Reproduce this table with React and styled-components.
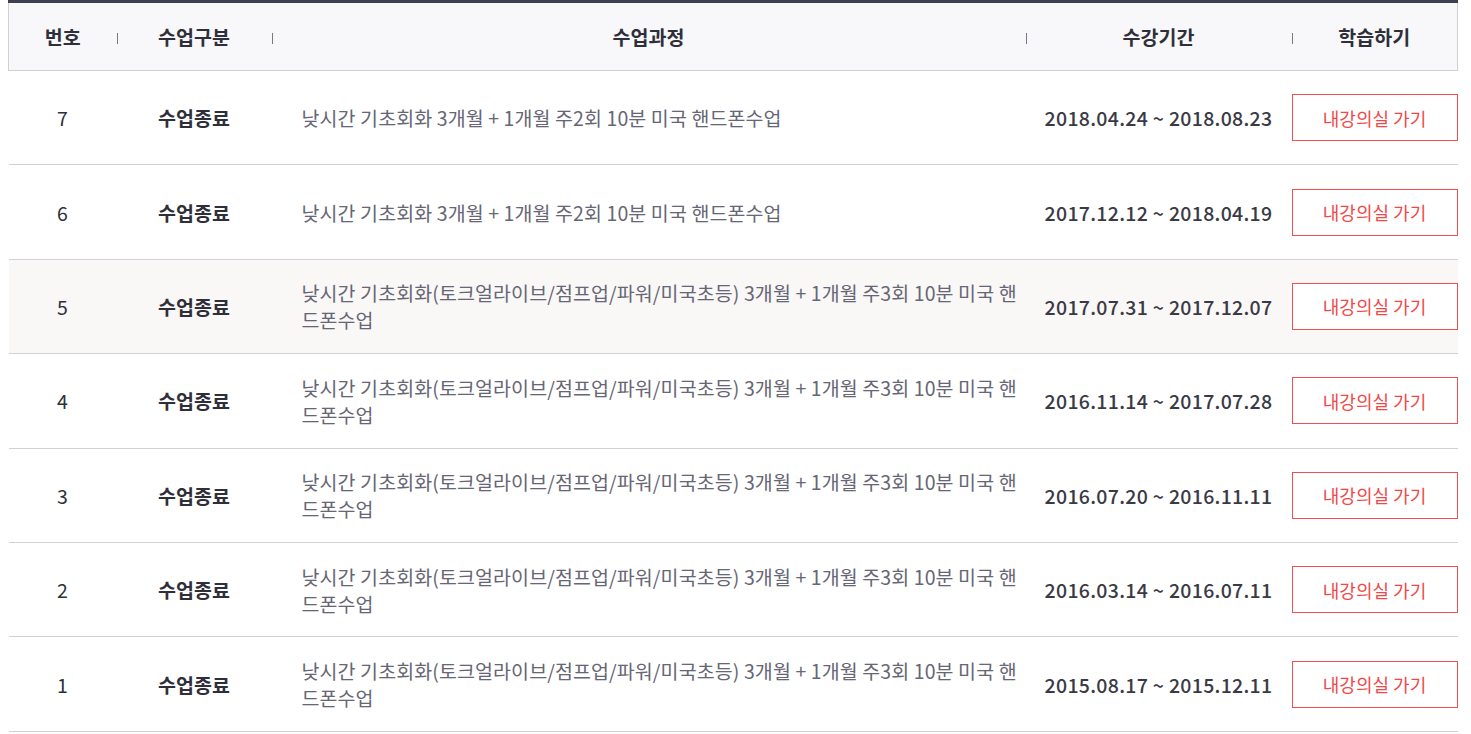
import React from "react";
import styled, { createGlobalStyle } from "styled-components";

const Global = createGlobalStyle`
  html, body { margin: 0; padding: 0; background: #fff; }
  body { font-family: "Noto Sans CJK KR", "Noto Sans", sans-serif; }
`;

const Wrap = styled.div`
  padding: 0 14px 0 8px;
`;

const Table = styled.table`
  width: 100%;
  border-collapse: collapse;
  table-layout: fixed;
  border-top: 3px solid #3f3f52;
`;

const HeadRow = styled.tr`
  background: #f8f8fa;
  border-left: 1px solid #cfcfd4;
  border-right: 1px solid #cfcfd4;
  border-bottom: 1px solid #cfcfd4;
`;

const Th = styled.th`
  position: relative;
  height: 67px;
  padding: 0;
  font-size: 19.5px;
  font-weight: 700;
  color: #2f2f3a;
  text-align: center;
  &:not(:first-child)::before {
    content: "";
    position: absolute;
    left: 0;
    top: 30px;
    width: 1px;
    height: 11px;
    background: #77777f;
  }
`;

const Row = styled.tr`
  background: ${(p) => (p.$hl ? "#faf8f7" : "#fff")};
  border-bottom: 1px solid #d2d2d5;
`;

const Td = styled.td`
  height: 93.4px;
  padding: 0;
  text-align: center;
  vertical-align: middle;
  font-size: 19.5px;
  color: #2f2f3a;
`;

const Num = styled(Td)`
  font-weight: 400;
`;

const Status = styled(Td)`
  font-weight: 700;
`;

const Course = styled(Td)`
  text-align: left;
  padding: 0 4px 0 30px;
  color: #666674;
  line-height: 27px;
  letter-spacing: 0.1px;
`;

const Period = styled(Td)`
  font-weight: 500;
  color: #3a3a46;
  letter-spacing: 0.3px;
`;

const Btn = styled.button`
  display: block;
  width: 166px;
  height: 47px;
  margin: 0;
  padding: 0;
  background: #fff;
  border: 1px solid #f04f4f;
  color: #f04848;
  font-family: "Noto Sans CJK KR", "Noto Sans", sans-serif;
  font-size: 18px;
  cursor: pointer;
`;

const long = "낮시간 기초회화(토크얼라이브/점프업/파워/미국초등) 3개월 + 1개월 주3회 10분 미국 핸드폰수업";
const short = "낮시간 기초회화 3개월 + 1개월 주2회 10분 미국 핸드폰수업";

const rows = [
  { n: 7, c: short, p: "2018.04.24 ~ 2018.08.23" },
  { n: 6, c: short, p: "2017.12.12 ~ 2018.04.19" },
  { n: 5, c: long, p: "2017.07.31 ~ 2017.12.07", hl: true },
  { n: 4, c: long, p: "2016.11.14 ~ 2017.07.28" },
  { n: 3, c: long, p: "2016.07.20 ~ 2016.11.11" },
  { n: 2, c: long, p: "2016.03.14 ~ 2016.07.11" },
  { n: 1, c: long, p: "2015.08.17 ~ 2015.12.11" },
];

export default function App() {
  return (
    <Wrap>
      <Global />
      <Table>
        <colgroup>
          <col style={{ width: 108 }} />
          <col style={{ width: 155 }} />
          <col style={{ width: 754 }} />
          <col style={{ width: 266 }} />
          <col style={{ width: 166 }} />
        </colgroup>
        <thead>
          <HeadRow>
            <Th>번호</Th>
            <Th>수업구분</Th>
            <Th>수업과정</Th>
            <Th>수강기간</Th>
            <Th>학습하기</Th>
          </HeadRow>
        </thead>
        <tbody>
          {rows.map((r) => (
            <Row key={r.n} $hl={r.hl}>
              <Num>{r.n}</Num>
              <Status>수업종료</Status>
              <Course>{r.c}</Course>
              <Period>{r.p}</Period>
              <Td>
                <Btn>내강의실 가기</Btn>
              </Td>
            </Row>
          ))}
        </tbody>
      </Table>
    </Wrap>
  );
}
